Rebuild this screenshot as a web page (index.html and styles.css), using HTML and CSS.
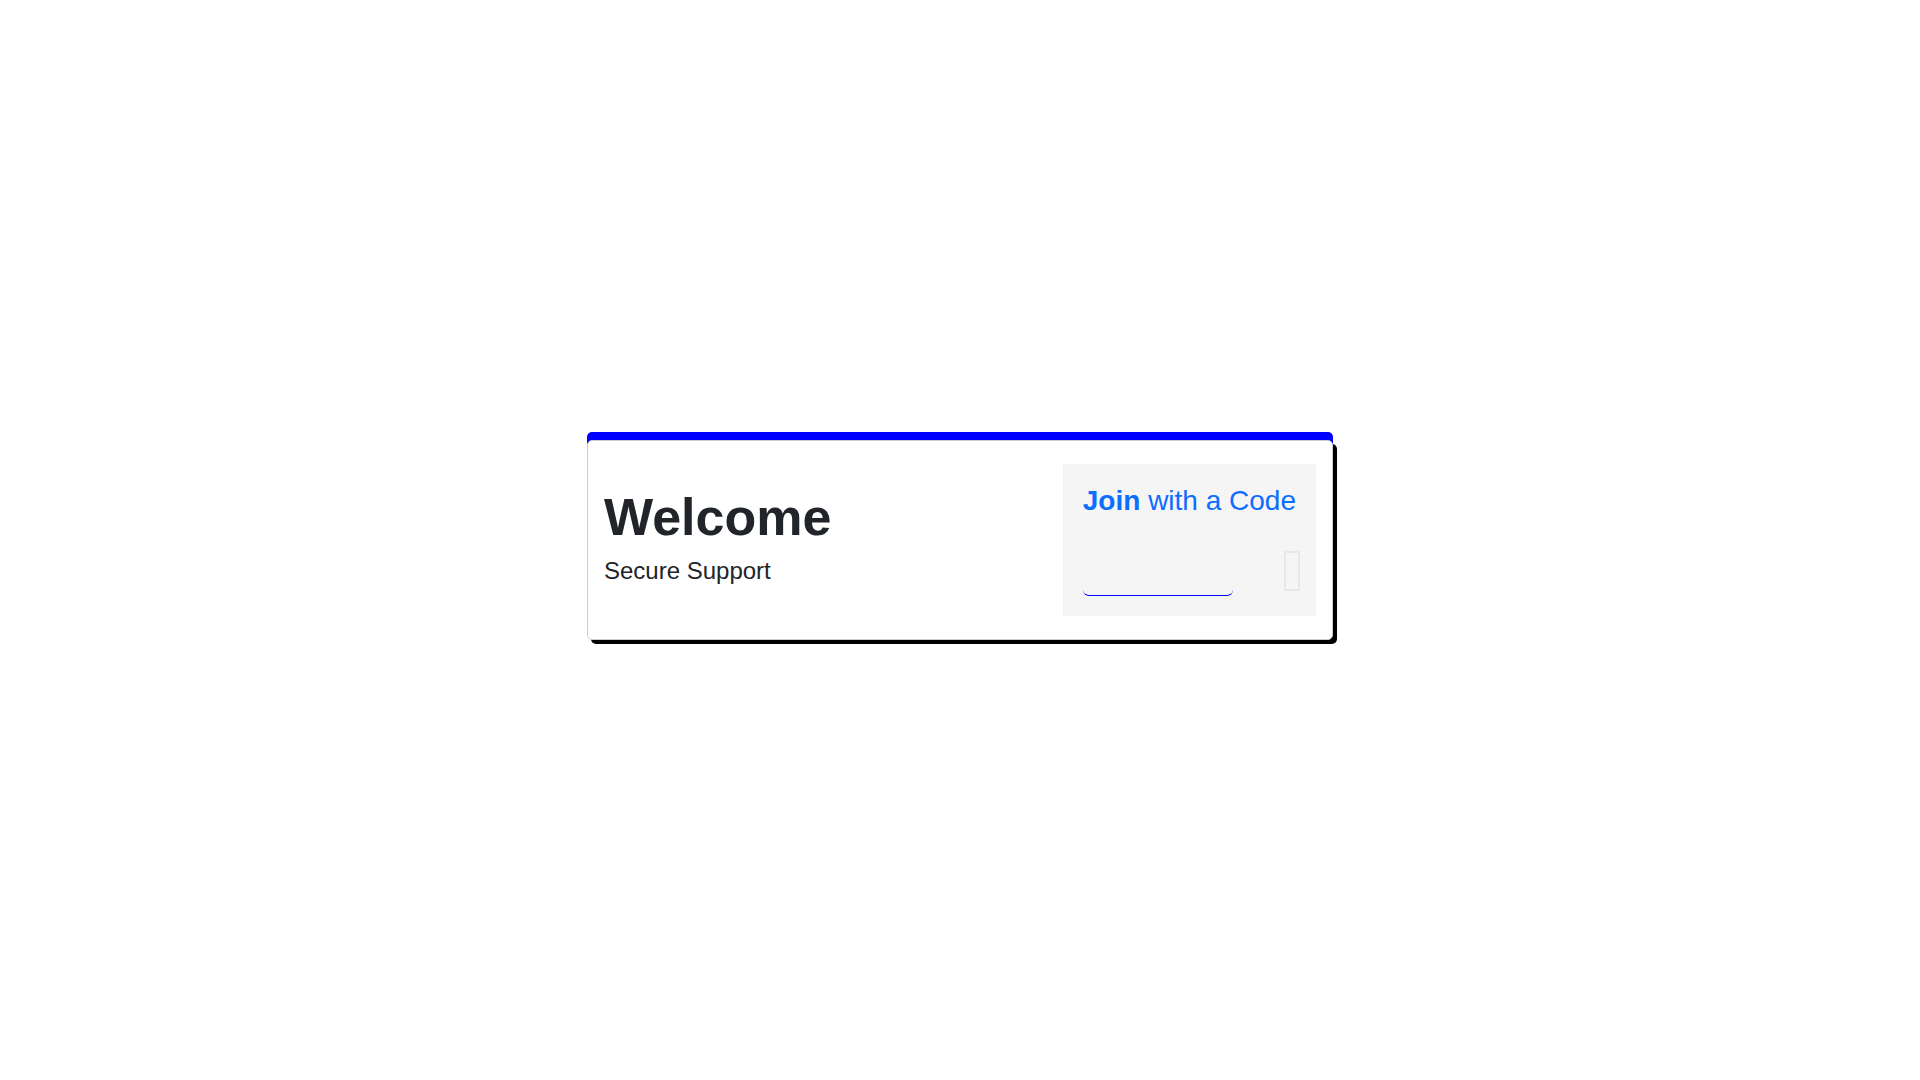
FILE: index.html
```html
<!DOCTYPE html>
<html lang="en">
<head>
  <meta charset="UTF-8" />
  <meta name="viewport" content="width=device-width, initial-scale=1.0"/>
  <title>Welcome - Secure Support</title>
  <link rel="stylesheet" href="styles.css">
</head>
<body>

<main class="card">
  <div class="intro">
    <h1>Welcome</h1>
    <h2>Secure Support</h2>
  </div>

  <form class="join">
    <label class="join-title" for="join-code"><b>Join</b> with a Code</label>
    <div class="join-row">
      <input type="text" id="join-code" class="join-code" autocomplete="off" />
      <button type="submit" class="join-button" aria-label="Join">
        <span class="join-icon"></span>
      </button>
    </div>
  </form>
</main>

</body>
</html>
```
FILE: styles.css
```css
* {
  box-sizing: border-box;
}

body {
  margin: 0;
  min-height: 100vh;
  display: flex;
  justify-content: center;
  align-items: center;
  background-color: white;
  color: #212529;
  font-family: "Liberation Sans", Arial, sans-serif;
}

.card {
  display: flex;
  flex-wrap: wrap;
  justify-content: space-between;
  align-items: center;
  width: 100%;
  max-width: 746px;
  padding: 23px 16px;
  background-color: white;
  border: 1px solid #ccc;
  border-radius: 5px;
  box-shadow: 0 -8px 0 blue, 4px 4px 0 black;
}

.intro h1 {
  margin: 0 0 8px;
  font-size: 52px;
  line-height: 62px;
}

.intro h2 {
  margin: 0 0 10px;
  font-size: 24px;
  font-weight: normal;
  line-height: 29px;
}

.join {
  padding: 20px;
  background-color: #f5f5f5;
}

.join-title {
  display: block;
  margin-bottom: 32px;
  color: #0d6efd;
  font-size: 28px;
  line-height: 34px;
}

.join-row {
  display: flex;
  justify-content: space-between;
  align-items: flex-end;
}

.join-code {
  width: 150px;
  height: 46px;
  padding: 6px 12px;
  background-color: transparent;
  border: 0 solid blue;
  border-bottom-width: 1px;
  border-radius: 6px;
  color: #212529;
  font-family: inherit;
  font-size: 24px;
  outline: none;
}

.join-button {
  display: flex;
  margin-right: -4px;
  padding: 0 0 5px;
  background: none;
  border: none;
  cursor: pointer;
}

.join-icon {
  width: 16px;
  height: 40px;
  border: 2px solid #e8e8e8;
}
```
